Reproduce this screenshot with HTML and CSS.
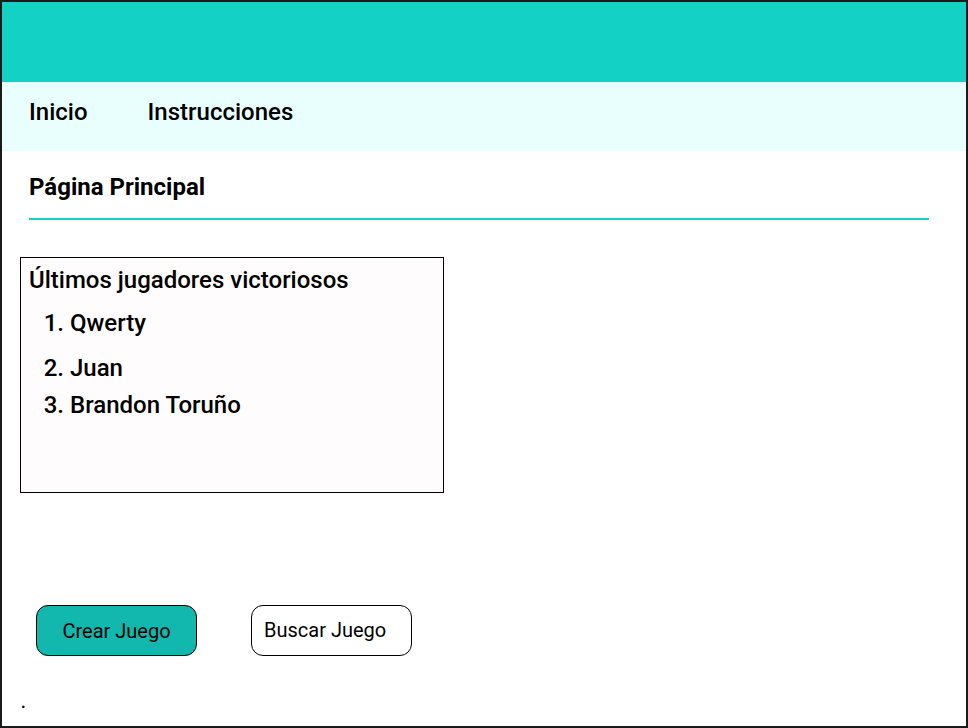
FILE: index.html
```html
<!DOCTYPE html>
<html lang="es">
<head>
<meta charset="utf-8">
<link rel="stylesheet" href="styles.css">
</head>
<body>
<div class="frame">
  <header class="top"></header>
  <nav class="nav">
    <a class="nav-link">Inicio</a>
    <a class="nav-link">Instrucciones</a>
  </nav>
  <section class="page">
    <h1 class="title">Página Principal</h1>
    <div class="winners">
      <p class="winners-title">Últimos jugadores victoriosos</p>
      <ol class="winners-list">
        <li class="w1">Qwerty</li>
        <li class="w2">Juan</li>
        <li class="w3">Brandon Toruño</li>
      </ol>
    </div>
    <div class="actions">
      <button class="btn btn-primary">Crear Juego</button>
      <button class="btn btn-secondary">Buscar Juego</button>
    </div>
    <p class="dot">.</p>
  </section>
</div>
</body>
</html>
```
FILE: styles.css
```css
* { box-sizing: border-box; }
html, body { margin: 0; padding: 0; }
body {
  font-family: Roboto, "Noto Sans", sans-serif;
  color: #000;
  background: #fff;
}
.frame {
  width: 968px;
  height: 728px;
  border: 2px solid #1a1a1a;
  display: flex;
  flex-direction: column;
  overflow: hidden;
}
.top {
  height: 80px;
  background: #14d1c6;
  flex: none;
}
.nav {
  height: 69px;
  background: #e8fffe;
  display: flex;
  align-items: flex-start;
  padding: 16px 0 0 27px;
  gap: 60px;
  flex: none;
}
.nav-link {
  font-size: 24px;
  line-height: 28px;
  font-weight: 500;
  color: #000;
}
.page {
  flex: 1;
  display: flex;
  flex-direction: column;
}
.title {
  margin: 22px 37px 0 27px;
  font-size: 24px;
  font-weight: 700;
  line-height: 28px;
  padding-bottom: 17px;
  border-bottom: 2px solid #14d1c6;
}
.winners {
  margin: 37px 0 0 18px;
  width: 424px;
  height: 236px;
  border: 1px solid #000;
  background: #fffcfd;
  padding: 8px 0 0 8px;
  flex: none;
}
.winners-title {
  margin: 0;
  font-size: 24px;
  line-height: 28px;
  font-weight: 500;
}
.winners-list {
  margin: 0;
  padding-left: 41px;
  font-size: 24px;
  line-height: 28px;
  font-weight: 500;
}
.w1 { margin-top: 15px; }
.w2 { margin-top: 17px; }
.w3 { margin-top: 9px; }
.actions {
  margin: 112px 0 0 34px;
  display: flex;
  gap: 54px;
}
.btn {
  width: 161px;
  height: 51px;
  border: 1px solid #000;
  border-radius: 12px;
  font-family: Roboto, "Noto Sans", sans-serif;
  font-size: 20px;
  color: #000;
  padding: 0;
}
.btn-primary {
  background: #12b8ad;
}
.btn-secondary {
  background: #fff;
  text-align: left;
  padding-left: 12px;
  padding-bottom: 2px;
}
.dot {
  margin: 39px 0 0 19px;
  font-size: 16px;
  line-height: 16px;
  font-weight: 700;
}
```
